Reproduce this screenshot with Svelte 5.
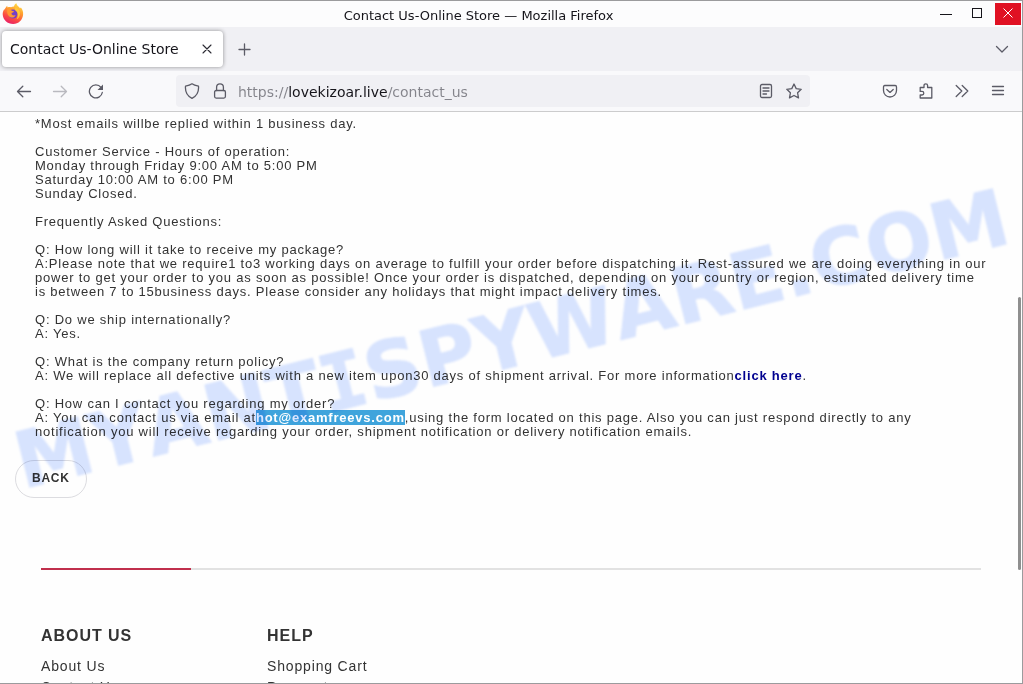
<script>
  let address = $state('https://lovekizoar.live/contact_us');

  const columns = [
    { title: 'ABOUT US', links: ['About Us', 'Contact Us'] },
    { title: 'HELP', links: ['Shopping Cart', 'Payment'] }
  ];
</script>

<div class="window">
  <header class="titlebar">
    <svg class="logo" viewBox="0 0 22 22" aria-hidden="true">
      <defs>
        <linearGradient id="flame" x1="0.75" y1="0" x2="0.3" y2="1">
          <stop offset="0" stop-color="#ffe14a" />
          <stop offset="0.35" stop-color="#ffa02e" />
          <stop offset="0.7" stop-color="#fb4b43" />
          <stop offset="1" stop-color="#e81e6b" />
        </linearGradient>
      </defs>
      <path fill="url(#flame)" d="M4 4.2 5.1 2.8 5.6 4.6C6.8 3.9 8 4 9 4.3 9.8 3.7 11 3.4 12 3.5 12.2 2 13.2.8 14.4.3 14.5 2.4 17 3.6 18 5.2L18.9 4.6C20.5 6.6 21.4 9 21.1 11.6 20.7 17.3 16.5 21 11.2 21 5.5 21 .9 17 .7 11.3.7 9.1 1.3 7.4 2.3 5.9L2.4 7.1C2.9 6 3.3 5 4 4.2Z" />
      <circle cx="11" cy="11" r="4.6" fill="#7540c7" />
      <path fill="#ff9832" d="M5.2 6.4C7.2 5.5 9 6.5 9.7 7.7L12 8.2C12 9.4 10 9.4 9.5 10.3 9.5 12.2 11.6 13 13.6 12 12.8 14.7 9 15.6 6.9 13.2 5.3 11.5 4.8 8.3 5.2 6.4Z" />
      <path fill="#ffc938" d="M13 4.5C16.5 5.2 18.5 8 18 11.4 17.5 14.2 16 15.6 14.6 16.3 16.1 13.6 16.7 9.3 13.2 7.2Z" />
    </svg>
    <h1>Contact Us-Online Store — Mozilla Firefox</h1>
    <div class="controls">
      <button aria-label="Minimize"><svg viewBox="0 0 26 22"><path d="M7 11.5H19" /></svg></button>
      <button aria-label="Maximize"><svg viewBox="0 0 26 22"><rect x="8.5" y="5.5" width="9" height="9" /></svg></button>
      <button class="close" aria-label="Close"><svg viewBox="0 0 26 22"><path d="M8.5 5.5 17.5 14.5M17.5 5.5 8.5 14.5" /></svg></button>
    </div>
  </header>

  <div class="tabs">
    <div class="tab">
      <span>Contact Us-Online Store</span>
      <button aria-label="Close tab"><svg class="icon dark" viewBox="0 0 16 16"><path d="M4 4 12 12M12 4 4 12" /></svg></button>
    </div>
    <button class="new" aria-label="New tab"><svg class="icon" viewBox="0 0 16 16"><path d="M7.5 3V14M2 8.5H13" /></svg></button>
    <button class="list" aria-label="List all tabs"><svg class="icon" viewBox="0 0 16 16"><path d="M2.5 5.5 8 11 13.5 5.5" /></svg></button>
  </div>

  <nav class="toolbar" aria-label="Navigation">
    <div class="group">
      <button aria-label="Back"><svg class="icon" viewBox="0 0 16 16"><path d="M14.5 8.5H1.8M6.8 3.2 1.5 8.5 6.8 13.8" /></svg></button>
      <button aria-label="Forward" disabled><svg class="icon" viewBox="0 0 16 16"><path d="M1.5 8.5H14.2M9.2 3.2 14.5 8.5 9.2 13.8" /></svg></button>
      <button aria-label="Reload"><svg class="icon" viewBox="0 0 16 16"><path d="M13 4.4A6.5 6.5 0 1 0 14.3 9.5" /><path class="solid" d="M15 1.5V7H9.5Z" /></svg></button>
    </div>
    <div class="urlbar">
      <svg class="icon" viewBox="0 0 16 16"><path d="M8 .8C6 2.3 3.8 2.8 1.5 3.2 1 9 3 13 8 15.3 13 13 15 9 14.5 3.2 12.2 2.8 10 2.3 8 .8Z" /></svg>
      <svg class="icon" viewBox="0 0 16 16"><rect x="2.6" y="7.5" width="10.8" height="7.6" rx="1.5" /><path d="M4.6 7.5V4.2A3.4 3.4 0 0 1 11.4 4.2V7.5" /></svg>
      <input type="text" aria-label="Address" bind:value={address} />
      <button aria-label="Reader view"><svg class="icon" viewBox="0 0 16 16"><rect x="2.5" y="1.5" width="11" height="13" rx="1.5" /><path d="M5 5H11M5 8H11M5 11H8.5" /></svg></button>
      <button aria-label="Bookmark"><svg class="icon" viewBox="0 0 16 16"><path d="M8 1 10.2 5.6 15.2 6.3 11.6 9.8 12.5 14.9 8 12.5 3.5 14.9 4.4 9.8.8 6.3 5.8 5.6Z" /></svg></button>
    </div>
    <div class="group">
      <button aria-label="Pocket"><svg class="icon" viewBox="0 0 16 16"><path d="M2.8 2.5H13.2Q14.5 2.5 14.5 4V7.5A6.5 6.5 0 0 1 1.5 7.5V4Q1.5 2.5 2.8 2.5Z" /><path d="M4.8 6.5 8 9.4 11.2 6.5" /></svg></button>
      <button aria-label="Extensions"><svg class="icon" viewBox="0 0 16 16"><path d="M2.2 7V4.5H6V2.6A1.8 1.8 0 0 1 9.6 2.6V4.5H13.8V15H2.2V12H4A1.8 1.8 0 0 0 4 8.4H2.2V7" /></svg></button>
      <button aria-label="More tools"><svg class="icon" viewBox="0 0 16 16"><path d="M2.2 2.5 7.8 8 2.2 13.5M8.2 2.5 13.8 8 8.2 13.5" /></svg></button>
      <button aria-label="Menu"><svg class="icon" viewBox="0 0 16 16"><path d="M2.5 3.5H13.5M2.5 7.5H13.5M2.5 11.5H13.5" /></svg></button>
    </div>
  </nav>

  <main>
    <article>
      <p>*Most emails willbe replied within 1 business day.</p>
      <p>Customer Service - Hours of operation:<br />Monday through Friday 9:00 AM to 5:00 PM<br />Saturday 10:00 AM to 6:00 PM<br />Sunday Closed.</p>
      <p>Frequently Asked Questions:</p>
      <p>Q: How long will it take to receive my package?<br />A:Please note that we require1 to3 working days on average to fulfill your order before dispatching it. Rest-assured we are doing everything in our power to get your order to you as soon as possible! Once your order is dispatched, depending on your country or region, estimated delivery time is between 7 to 15business days. Please consider any holidays that might impact delivery times.</p>
      <p>Q: Do we ship internationally?<br />A: Yes.</p>
      <p>Q: What is the company return policy?<br />A: We will replace all defective units with a new item upon30 days of shipment arrival. For more information<a href="#returns">click here</a>.</p>
      <p>Q: How can I contact you regarding my order?<br />A: You can contact us via email at<strong>hot@examfreevs.com</strong>,using the form located on this page. Also you can just respond directly to any notification you will receive regarding your order, shipment notification or delivery notification emails.</p>
    </article>
    <button class="back">BACK</button>

    <footer>
      <div class="rule"></div>
      <div class="columns">
        {#each columns as column}
          <section>
            <h2>{column.title}</h2>
            <ul>
              {#each column.links as link}
                <li><a href="#footer">{link}</a></li>
              {/each}
            </ul>
          </section>
        {/each}
      </div>
    </footer>

    <svg class="watermark" viewBox="0 0 1022 571" preserveAspectRatio="xMinYMin meet" aria-hidden="true">
      <text transform="translate(23 377) rotate(-14)">MYANT<tspan>I</tspan>SPYWARE.COM</text>
    </svg>
    <div class="scrollbar"></div>
  </main>
</div>

<style>
  :global(body) {
    margin: 0;
  }

  .window {
    box-sizing: border-box;
    height: 100vh;
    display: flex;
    flex-direction: column;
    overflow: hidden;
    border: solid #9b9b9d;
    border-width: 1px 1px 1px 0;
    background: #fefefe;
    font-family: "DejaVu Sans", sans-serif;
    color: #15141a;
  }

  button {
    padding: 0;
    border: 0;
    background: none;
    font: inherit;
    color: inherit;
  }

  svg {
    display: block;
    flex: none;
    fill: none;
    stroke: currentColor;
  }

  .icon {
    width: 16px;
    height: 16px;
    color: #5b5b66;
    stroke-width: 1.3;
    stroke-linejoin: round;
    stroke-linecap: round;
  }

  .dark {
    color: #2b2a33;
    stroke-width: 1.1;
  }

  .solid {
    fill: currentColor;
    stroke: none;
  }

  .titlebar {
    flex: none;
    display: grid;
    grid-template-columns: 1fr auto 1fr;
    align-items: center;
    height: 26px;
    padding: 0 1px 0 2px;
    background: #fcfcfd;
  }

  .logo {
    width: 22px;
    height: 22px;
    stroke: none;
  }

  h1 {
    margin: 0;
    padding: 3px 66px 0 0;
    font-size: 13px;
    font-weight: 400;
    line-height: 16px;
  }

  .controls {
    display: flex;
    justify-content: flex-end;
    gap: 5px;
  }

  .controls svg {
    width: 26px;
    height: 22px;
  }

  .close {
    background: #e01123;
    color: #fff;
  }

  .tabs {
    flex: none;
    display: flex;
    align-items: center;
    height: 44px;
    padding: 0 12px 0 2px;
    background: #f0f0f4;
  }

  .tab {
    display: flex;
    align-items: center;
    justify-content: space-between;
    box-sizing: border-box;
    width: 221px;
    height: 36px;
    padding: 0 8px;
    border-radius: 4px;
    background: #fff;
    box-shadow: 0 0 4px #0006;
    font-size: 14px;
  }

  .new {
    margin-left: 14px;
  }

  .list {
    margin-left: auto;
  }

  .toolbar {
    flex: none;
    display: flex;
    align-items: center;
    justify-content: space-between;
    height: 40px;
    padding: 0 16px;
    border-bottom: 1px solid #cccccd;
    background: #f9f9fb;
  }

  .group {
    display: flex;
    gap: 20px;
  }

  .toolbar button:disabled {
    opacity: 0.4;
  }

  .urlbar {
    display: flex;
    align-items: center;
    gap: 12px;
    box-sizing: border-box;
    flex: 0 1 634px;
    height: 32px;
    padding: 0 8px;
    border-radius: 4px;
    background: #f0f0f4;
  }

  .urlbar input {
    flex: 1;
    min-width: 0;
    margin-left: -2px;
    padding: 2px 0 0;
    border: 0;
    background: linear-gradient(90deg, #84848b 50px, #15141a 50px 150px, #84848b 150px);
    -webkit-background-clip: text;
    background-clip: text;
    color: transparent;
    font: 14px/20px "DejaVu Sans", sans-serif;
  }

  main {
    position: relative;
    flex: 1;
    min-height: 0;
    overflow: hidden;
    font-family: "Liberation Sans", Arial, sans-serif;
    color: #333;
  }

  article,
  .back,
  h2,
  li {
    letter-spacing: 0.06em;
  }

  article {
    padding: 5px 35px 0;
    font-size: 13px;
    line-height: 14px;
  }

  p {
    margin: 0 0 14px;
  }

  article a {
    color: #00008f;
    font-weight: 700;
    text-decoration: none;
  }

  strong {
    background: #3fa4dc;
    color: #fff;
  }

  .back {
    display: block;
    height: 38px;
    margin: 21px 15px 0;
    padding: 0 16px 2px;
    border: 1px solid #dcdce0;
    border-radius: 19px;
    font-size: 12px;
    font-weight: 700;
  }

  footer {
    padding: 70px 41px 0;
  }

  .rule {
    height: 2px;
    background: linear-gradient(90deg, #c02f4c 150px, #e2e2e2 150px);
  }

  .columns {
    display: grid;
    grid-template-columns: repeat(auto-fill, 226px);
    padding-top: 56px;
  }

  h2 {
    margin: 0 0 10px;
    font-size: 16px;
    line-height: 20px;
  }

  ul {
    margin: 0;
    padding: 0;
    list-style: none;
    font-size: 14px;
    line-height: 21px;
  }

  li a {
    color: inherit;
    text-decoration: none;
  }

  .watermark {
    position: absolute;
    top: 0;
    left: 0;
    width: 100%;
    mix-blend-mode: multiply;
    pointer-events: none;
    filter: blur(1px);
  }

  .watermark text {
    fill: #d8e4ff;
    stroke: #d8e4ff;
    stroke-width: 1;
    font: 700 78px "DejaVu Sans", sans-serif;
    font-kerning: none;
  }

  .watermark tspan {
    font-family: "DejaVu Sans Mono", monospace;
  }

  .scrollbar {
    position: absolute;
    top: 185px;
    right: 1px;
    width: 3px;
    height: 273px;
    border-radius: 2px;
    background: #8f8f8f;
  }
</style>
